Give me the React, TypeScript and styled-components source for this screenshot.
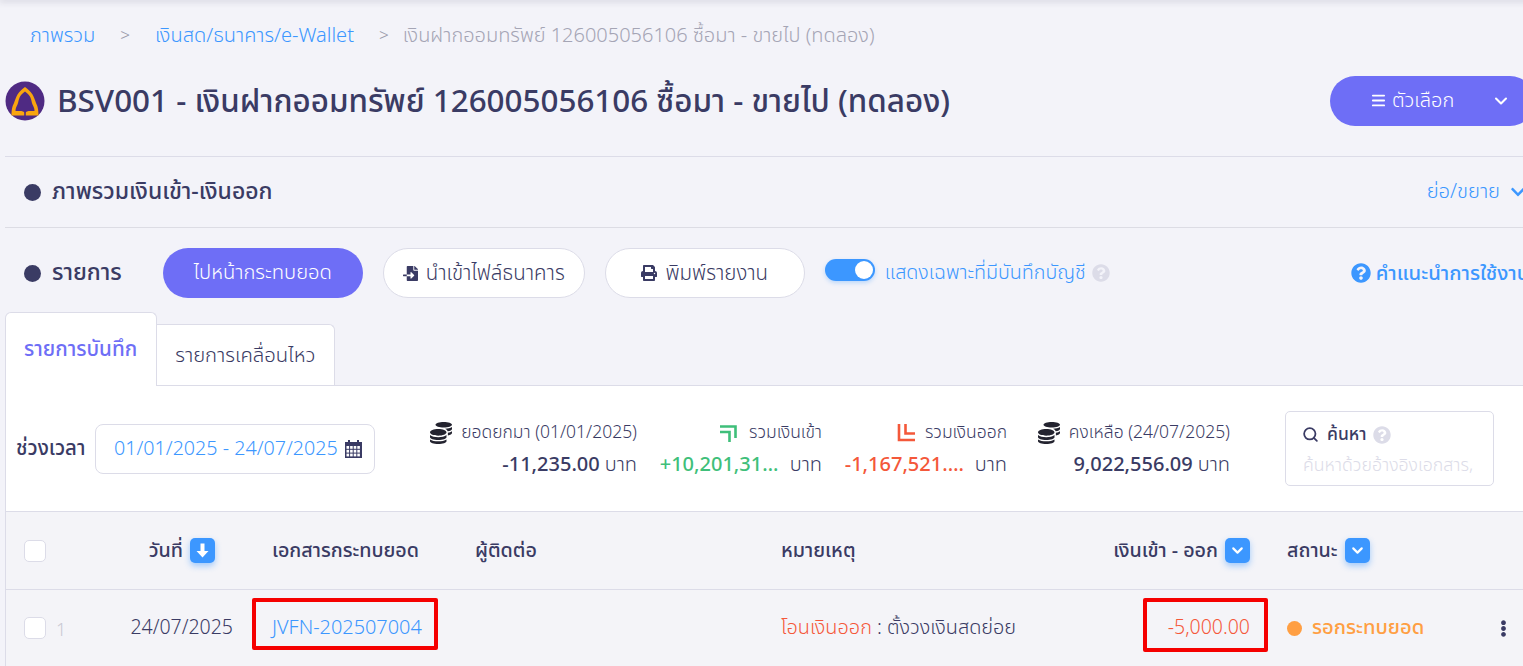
import React from 'react';
import styled, { createGlobalStyle } from 'styled-components';
import { FaCoins, FaFileImport, FaPrint, FaQuestionCircle, FaEllipsisV, FaChevronDown } from 'react-icons/fa';
import { Menu, ChevronDown, Search } from 'lucide-react';

const GlobalStyle = createGlobalStyle`
  html, body {
    margin: 0;
    padding: 0;
    height: 100%;
    overflow: hidden;
    background: #f3f3f9;
    font-family: "Noto Sans Thai", "Noto Sans", "Open Sans", sans-serif;
    color: #3a3b64;
  }
  * { box-sizing: border-box; }
`;

const Page = styled.div`
  position: relative;
  width: 1560px;
  height: 666px;
  padding-left: 5px;
  overflow: hidden;
`;

const TopShadow = styled.div`
  height: 0;
  margin-left: -5px;
  box-shadow: 0 0 6px 1px rgba(40, 40, 70, 0.3);
`;

const Breadcrumb = styled.nav`
  display: flex;
  align-items: center;
  height: 70px;
  padding: 2px 0 0 25px;
  font-size: 20px;
  font-weight: 300;
`;

const Crumb = styled.a<{ $muted?: boolean }>`
  color: ${({ $muted }) => ($muted ? '#a5a5b5' : '#3c97ff')};
`;

const CrumbSep = styled.span<{ $tight?: boolean }>`
  color: #9a9aaa;
  font-size: 17px;
  margin: 0 ${({ $tight }) => ($tight ? 14 : 25)}px 0 25px;
`;

const Header = styled.header`
  display: flex;
  align-items: center;
  height: 86px;
  margin-top: 1px;
  padding-bottom: 26px;
  border-bottom: 1px solid #dcdce8;
`;

const Title = styled.h1`
  margin: 4px 0 0 12px;
  font-size: 31.4px;
  font-weight: 500;
  color: #3a3b64;
  white-space: nowrap;
`;

const OptionsButton = styled.button`
  display: flex;
  align-items: center;
  margin-left: auto;
  margin-right: 25px;
  width: 205px;
  height: 50px;
  border: none;
  border-radius: 25px;
  background: #6e6ef6;
  color: #fff;
  font: inherit;
  font-size: 20px;
  font-weight: 300;
  padding-left: 40px;
  gap: 5px;
`;

const OptionsCaret = styled.span`
  display: flex;
  margin-left: 32px;
`;

const SectionBar = styled.section`
  display: flex;
  align-items: center;
  height: 71px;
  padding: 0 0 0 19px;
  border-bottom: 1px solid #dcdce4;
`;

const Dot = styled.span`
  width: 17px;
  height: 17px;
  border-radius: 50%;
  background: #3a3b64;
  flex-shrink: 0;
`;

const SectionTitle = styled.h2`
  margin: 0 0 0 11px;
  font-size: 23px;
  font-weight: 500;
  color: #3a3b64;
  white-space: nowrap;
`;

const Collapse = styled.a`
  display: flex;
  align-items: center;
  gap: 10px;
  margin-left: auto;
  margin-right: 34px;
  color: #3c97ff;
  font-size: 20.2px;
  font-weight: 300;
`;

const ActionRow = styled.div`
  display: flex;
  align-items: center;
  height: 50px;
  margin-top: 20px;
  padding-left: 19px;
`;

const PrimaryPill = styled.button`
  width: 200px;
  height: 50px;
  margin-left: 41px;
  border: none;
  border-radius: 25px;
  background: #6e6ef6;
  color: #fff;
  font: inherit;
  font-size: 20.2px;
  font-weight: 300;
`;

const OutlinePill = styled.button<{ $width: number }>`
  display: flex;
  align-items: center;
  justify-content: center;
  gap: 8px;
  width: ${({ $width }) => $width}px;
  height: 50px;
  margin-left: 20px;
  border: 1px solid #dcdce8;
  border-radius: 25px;
  background: #fff;
  color: #3a3b64;
  font: inherit;
  font-size: 20.5px;
  font-weight: 300;
`;

const Toggle = styled.span`
  position: relative;
  width: 50px;
  height: 22px;
  margin: -6px 0 0 20px;
  border-radius: 11px;
  background: #3c97ff;
  box-shadow: 0 2px 4px rgba(60, 151, 255, 0.3);
  &::after {
    content: '';
    position: absolute;
    top: 2px;
    right: 2px;
    width: 18px;
    height: 18px;
    border-radius: 50%;
    background: #fff;
  }
`;

const ToggleLabel = styled.span`
  margin-left: 10px;
  color: #3c97ff;
  font-size: 19.7px;
  font-weight: 300;
`;

const Hint = styled.span`
  display: flex;
  margin-left: 6px;
  color: #dcdce8;
  font-size: 18px;
`;

const HelpLink = styled.a`
  display: flex;
  align-items: center;
  gap: 5px;
  margin-left: 241px;
  color: #3c97ff;
  font-size: 20.3px;
  font-weight: 500;
  white-space: nowrap;
`;

const Tabs = styled.div`
  display: flex;
  align-items: flex-end;
  height: 73px;
  margin-top: 14px;
`;

const Tab = styled.div<{ $active?: boolean }>`
  display: flex;
  align-items: center;
  justify-content: center;
  height: ${({ $active }) => ($active ? 74 : 61)}px;
  margin-bottom: ${({ $active }) => ($active ? -1 : 0)}px;
  padding: 0 ${({ $active }) => ($active ? 19 : 18)}px 0 18px;
  background: #fff;
  border: 1px solid #dcdce8;
  border-left-width: ${({ $active }) => ($active ? 1 : 0)}px;
  border-bottom: none;
  border-radius: ${({ $active }) => ($active ? '6px 6px 0 0' : '0 6px 0 0')};
  color: ${({ $active }) => ($active ? '#6e6ef6' : '#3a3b64')};
  font-size: ${({ $active }) => ($active ? 20.6 : 20.3)}px;
  font-weight: ${({ $active }) => ($active ? 500 : 300)};
  z-index: ${({ $active }) => ($active ? 1 : 0)};
`;

const Card = styled.div`
  background: #fff;
  border-top: 1px solid #dcdce8;
  border-left: 1px solid #dcdce8;
`;

const FilterRow = styled.div`
  display: flex;
  align-items: flex-start;
  height: 125px;
  padding: 25px 0 0 10px;
`;

const PeriodLabel = styled.span`
  margin-top: 13px;
  width: 79px;
  font-size: 20.4px;
  line-height: 50px;
  font-weight: 500;
  color: #3a3b64;
`;

const DatePicker = styled.div`
  display: flex;
  align-items: center;
  justify-content: space-between;
  width: 280px;
  height: 50px;
  margin-top: 13px;
  padding: 0 12px 0 18px;
  border: 1px solid #dcdce8;
  border-radius: 8px;
  color: #3c97ff;
  font-size: 19.7px;
  font-weight: 300;
`;

const Stat = styled.div<{ $width: number; $gap: number }>`
  display: flex;
  flex-direction: column;
  align-items: flex-end;
  gap: 4px;
  width: ${({ $width }) => $width}px;
  margin-left: ${({ $gap }) => $gap}px;
  margin-top: 8px;
`;

const StatLabel = styled.div<{ $gap?: number }>`
  display: flex;
  align-items: center;
  gap: ${({ $gap }) => $gap || 9}px;
  font-size: 17.5px;
  font-weight: 300;
  color: #3a3b64;
  white-space: nowrap;
`;

const StatValue = styled.div`
  display: flex;
  align-items: center;
  gap: 5px;
  font-size: 20px;
  font-weight: 300;
  white-space: nowrap;
`;

const Amount = styled.b<{ $color?: string; $clip?: boolean }>`
  display: block;
  font-weight: 500;
  color: ${({ $color }) => $color || '#3a3b64'};
  ${({ $clip }) => $clip && 'max-width: 120px; margin-right: 5px; overflow: hidden; text-overflow: ellipsis;'}
`;

const CoinIcon = styled.span`
  display: flex;
  color: #23232f;
  font-size: 22px;
`;

const SearchBox = styled.div`
  width: 209px;
  height: 75px;
  margin-left: 55px;
  padding: 9px 16px;
  border: 1px solid #dcdce8;
  border-radius: 5px;
`;

const SearchTitle = styled.div`
  display: flex;
  align-items: center;
  gap: 8px;
  font-size: 17.5px;
  font-weight: 500;
`;

const SearchHint = styled(Hint)`
  margin-left: -2px;
`;

const SearchHolder = styled.div`
  margin: 4px 0 0 1px;
  color: #dcdce8;
  font-size: 17.7px;
  font-weight: 300;
  white-space: nowrap;
  overflow: hidden;
`;

const TableRow = styled.div<{ $height: number }>`
  display: grid;
  grid-template-columns: 99px 148px 202px 306px 334px 172px 213px 60px;
  align-items: center;
  height: ${({ $height }) => $height}px;
  background: #f4f4f8;
  border-top: 1px solid #dcdce8;
`;

const Cell = styled.div<{ $right?: number; $left?: number }>`
  position: relative;
  display: flex;
  align-items: center;
  height: 100%;
  gap: 7px;
  justify-content: ${({ $right }) => ($right !== undefined ? 'flex-end' : 'flex-start')};
  padding-right: ${({ $right }) => $right || 0}px;
  padding-left: ${({ $left }) => $left || 0}px;
  font-size: 19.5px;
  font-weight: 300;
  white-space: nowrap;
`;

const HeadText = styled.span`
  font-size: 19.7px;
  font-weight: 500;
`;

const Checkbox = styled.span`
  width: 22px;
  height: 22px;
  border: 1px solid #dcdce8;
  border-radius: 5px;
  background: #fff;
`;

const RowNumber = styled.span`
  margin: 4px 0 0 3px;
  color: #c8c8d2;
  font-size: 18px;
`;

const SortButton = styled.span`
  display: flex;
  align-items: center;
  justify-content: center;
  width: 25px;
  height: 25px;
  border-radius: 5px;
  background: #3c97ff;
  color: #fff;
  box-shadow: 0 3px 6px rgba(60, 151, 255, 0.45);
`;

const DocLink = styled.a`
  color: #3c97ff;
  font-size: 19.9px;
`;

const Note = styled.span`
  color: #3a3b64;
  font-size: 19.9px;
`;

const NoteType = styled.span`
  color: #f4583a;
`;

const NegativeAmount = styled.span`
  color: #f4583a;
`;

const StatusDot = styled.span`
  width: 15px;
  height: 15px;
  margin-right: 3px;
  border-radius: 50%;
  background: #ff9f43;
`;

const StatusText = styled.span`
  color: #ff9f43;
  font-size: 20.2px;
  font-weight: 500;
`;

const RowMenu = styled.span`
  display: flex;
  color: #3a3b64;
  font-size: 17px;
`;

const Highlight = styled.span<{ $left: number; $width: number; $height: number }>`
  position: absolute;
  top: 8px;
  left: ${({ $left }) => $left}px;
  width: ${({ $width }) => $width}px;
  height: ${({ $height }) => $height}px;
  border: 4px solid #f50000;
  border-radius: 2px;
`;

const BankLogo = () => (
  <svg width="40" height="40" viewBox="0 0 40 40">
    <circle cx="20" cy="20" r="19.5" fill="#4f2a83" />
    <path
      fillRule="evenodd"
      fill="#f9a50f"
      d="M20 6 C22.5 8 25.5 10 27.5 13.5 C29.5 17 30 19.5 31 22 C32.5 25 33.5 28 33.5 34.5 L6.5 34.5 C6.5 28 7.5 25 9 22 C10 19.5 10.5 17 12.5 13.5 C14.5 10 17.5 8 20 6 Z
         M20 10.5 C18 12 15.8 14 14.8 16 C13.5 18.5 13.5 21 12.5 23.5 C11.5 25.5 10.5 27 10.5 30 L15 30 C17 30 19 30.5 20 32 C21 30.5 23 30 25 30 L29.5 30 C29.5 27 28.5 25.5 27.5 23.5 C26.5 21 26.5 18.5 25.2 16 C24.2 14 22 12 20 10.5 Z"
    />
    <rect x="19.2" y="31" width="1.6" height="4" fill="#4f2a83" />
  </svg>
);

const CalendarIcon = () => (
  <svg width="17" height="18" viewBox="0 0 17 18">
    <rect x="3" y="0" width="2" height="3" fill="#3a3b64" />
    <rect x="12" y="0" width="2" height="3" fill="#3a3b64" />
    <rect x="0" y="2" width="17" height="16" fill="#3a3b64" />
    {[0, 1, 2, 3].map((col) =>
      [0, 1, 2].map((row) => (
        <rect key={`${col}-${row}`} x={1.5 + col * 3.6} y={6 + row * 3.8} width="2.6" height="2.8" fill="#fff" />
      ))
    )}
  </svg>
);

const SortDownIcon = () => (
  <svg width="13" height="15" viewBox="0 0 13 15" fill="#fff">
    <path d="M4.5 0.5 H8.5 V8 H12.5 L6.5 14.5 L0.5 8 H4.5 Z" />
  </svg>
);

const MoneyInIcon = () => (
  <svg width="18" height="18" viewBox="0 0 18 18" fill="none" stroke="#3fbf7a" strokeWidth="2.6">
    <path d="M1 2.5 H16.5 V14" />
    <path d="M1 8 H10.5 V18" />
  </svg>
);

const MoneyOutIcon = () => (
  <svg width="18" height="18" viewBox="0 0 18 18" fill="none" stroke="#f4583a" strokeWidth="2.6">
    <path d="M2 0 V16 H18" />
    <path d="M8.5 0 V9.5 H18" />
  </svg>
);

export default function App() {
  return (
    <>
      <GlobalStyle />
      <Page>
        <TopShadow />
        <Breadcrumb>
          <Crumb>ภาพรวม</Crumb>
          <CrumbSep>&gt;</CrumbSep>
          <Crumb>เงินสด/ธนาคาร/e-Wallet</Crumb>
          <CrumbSep $tight>&gt;</CrumbSep>
          <Crumb $muted>เงินฝากออมทรัพย์ 126005056106 ซื้อมา - ขายไป (ทดลอง)</Crumb>
        </Breadcrumb>
        <Header>
          <BankLogo />
          <Title>BSV001 - เงินฝากออมทรัพย์ 126005056106 ซื้อมา - ขายไป (ทดลอง)</Title>
          <OptionsButton>
            <Menu size={17} strokeWidth={2.5} />
            ตัวเลือก
            <OptionsCaret>
              <ChevronDown size={20} strokeWidth={2.5} />
            </OptionsCaret>
          </OptionsButton>
        </Header>
        <SectionBar>
          <Dot />
          <SectionTitle>ภาพรวมเงินเข้า-เงินออก</SectionTitle>
          <Collapse>
            ย่อ/ขยาย
            <FaChevronDown size={16} />
          </Collapse>
        </SectionBar>
        <ActionRow>
          <Dot />
          <SectionTitle>รายการ</SectionTitle>
          <PrimaryPill>ไปหน้ากระทบยอด</PrimaryPill>
          <OutlinePill $width={202}>
            <FaFileImport size={15} />
            นำเข้าไฟล์ธนาคาร
          </OutlinePill>
          <OutlinePill $width={200}>
            <FaPrint size={16} />
            พิมพ์รายงาน
          </OutlinePill>
          <Toggle />
          <ToggleLabel>แสดงเฉพาะที่มีบันทึกบัญชี</ToggleLabel>
          <Hint>
            <FaQuestionCircle />
          </Hint>
          <HelpLink>
            <FaQuestionCircle size={20} />
            คำแนะนำการใช้งาน
          </HelpLink>
        </ActionRow>
        <Tabs>
          <Tab $active>รายการบันทึก</Tab>
          <Tab>รายการเคลื่อนไหว</Tab>
        </Tabs>
        <Card>
          <FilterRow>
            <PeriodLabel>ช่วงเวลา</PeriodLabel>
            <DatePicker>
              01/01/2025 - 24/07/2025
              <CalendarIcon />
            </DatePicker>
            <Stat $width={206} $gap={56}>
              <StatLabel>
                <CoinIcon>
                  <FaCoins />
                </CoinIcon>
                ยอดยกมา (01/01/2025)
              </StatLabel>
              <StatValue>
                <Amount>-11,235.00</Amount> บาท
              </StatValue>
            </Stat>
            <Stat $width={165} $gap={20}>
              <StatLabel $gap={12}>
                <MoneyInIcon />
                รวมเงินเข้า
              </StatLabel>
              <StatValue>
                <Amount $clip $color="#3fbf7a">+10,201,312.59</Amount> บาท
              </StatValue>
            </Stat>
            <Stat $width={165} $gap={20}>
              <StatLabel $gap={10}>
                <MoneyOutIcon />
                รวมเงินออก
              </StatLabel>
              <StatValue>
                <Amount $clip $color="#f4583a">-1,167,521.50</Amount> บาท
              </StatValue>
            </Stat>
            <Stat $width={203} $gap={20}>
              <StatLabel>
                <CoinIcon>
                  <FaCoins />
                </CoinIcon>
                คงเหลือ (24/07/2025)
              </StatLabel>
              <StatValue>
                <Amount>9,022,556.09</Amount> บาท
              </StatValue>
            </Stat>
            <SearchBox>
              <SearchTitle>
                <Search size={17} strokeWidth={2.5} />
                ค้นหา
                <SearchHint>
                  <FaQuestionCircle />
                </SearchHint>
              </SearchTitle>
              <SearchHolder>ค้นหาด้วยอ้างอิงเอกสาร,</SearchHolder>
            </SearchBox>
          </FilterRow>
          <TableRow $height={78}>
            <Cell $left={18}>
              <Checkbox />
            </Cell>
            <Cell $right={38}>
              <HeadText>วันที่</HeadText>
              <SortButton>
                <SortDownIcon />
              </SortButton>
            </Cell>
            <Cell $left={19}>
              <HeadText>เอกสารกระทบยอด</HeadText>
            </Cell>
            <Cell $left={20}>
              <HeadText>ผู้ติดต่อ</HeadText>
            </Cell>
            <Cell $left={20}>
              <HeadText>หมายเหตุ</HeadText>
            </Cell>
            <Cell $right={17}>
              <HeadText>เงินเข้า - ออก</HeadText>
              <SortButton>
                <ChevronDown size={17} strokeWidth={3} />
              </SortButton>
            </Cell>
            <Cell $left={20}>
              <HeadText>สถานะ</HeadText>
              <SortButton>
                <ChevronDown size={17} strokeWidth={3} />
              </SortButton>
            </Cell>
            <Cell />
          </TableRow>
          <TableRow $height={77}>
            <Cell $left={18}>
              <Checkbox />
              <RowNumber>1</RowNumber>
            </Cell>
            <Cell $right={20}>24/07/2025</Cell>
            <Cell $left={19}>
              <DocLink>JVFN-202507004</DocLink>
              <Highlight $left={-1} $width={186} $height={52} />
            </Cell>
            <Cell />
            <Cell $left={20}>
              <Note>
                <NoteType>โอนเงินออก</NoteType> : ตั้งวงเงินสดย่อย
              </Note>
            </Cell>
            <Cell $right={17}>
              <NegativeAmount>-5,000.00</NegativeAmount>
              <Highlight $left={48} $width={125} $height={54} />
            </Cell>
            <Cell $left={20}>
              <StatusDot />
              <StatusText>รอกระทบยอด</StatusText>
            </Cell>
            <Cell $left={15}>
              <RowMenu>
                <FaEllipsisV />
              </RowMenu>
            </Cell>
          </TableRow>
        </Card>
      </Page>
    </>
  );
}
